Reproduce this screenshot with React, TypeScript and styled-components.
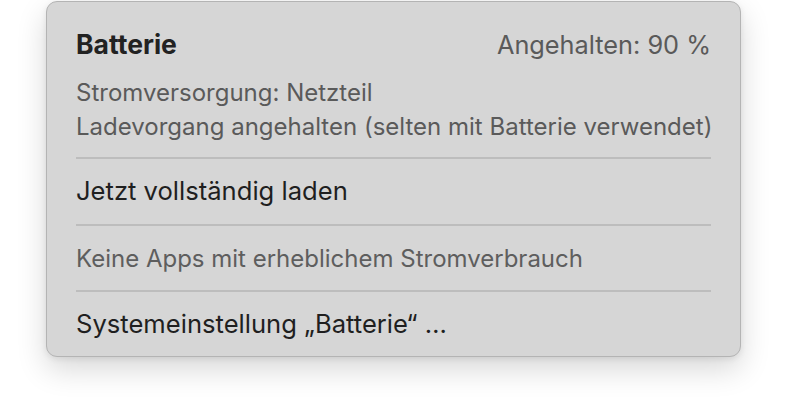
import React from "react";
import styled, { createGlobalStyle } from "styled-components";

const Global = createGlobalStyle`
  html, body { margin: 0; padding: 0; background: #ffffff; }
  body { font-family: Inter, "Noto Sans", "Liberation Sans", sans-serif; -webkit-font-smoothing: antialiased; }
`;

const Page = styled.div`
  width: 788px;
  height: 412px;
  padding: 1px 0 0 46px;
  box-sizing: border-box;
`;

const Panel = styled.div`
  width: 695px;
  box-sizing: border-box;
  background: #d6d6d6;
  border: 1px solid #b4b4b4;
  border-radius: 11px;
  box-shadow: 0 12px 30px rgba(0, 0, 0, 0.16), 0 2px 6px rgba(0, 0, 0, 0.08);
  padding: 0 29px 0 29px;
  display: flex;
  flex-direction: column;
`;

const Header = styled.div`
  padding: 25px 0 13px;
  display: flex;
  flex-direction: column;
`;

const TitleRow = styled.div`
  display: flex;
  justify-content: space-between;
  align-items: baseline;
  line-height: 34px;
  height: 34px;
  margin-bottom: 15px;
`;

const Title = styled.span`
  font-size: 26.5px;
  font-weight: 700;
  color: #222222;
`;

const Status = styled.span`
  font-size: 25.3px;
  color: #5a5a5a;
`;

const InfoLine = styled.div`
  font-size: 24px;
  line-height: 34px;
  color: #5a5a5a;
  white-space: nowrap;
`;

const Divider = styled.div`
  height: 2px;
  background: #bdbdbd;
`;

const Item = styled.div<{ $muted?: boolean; $pt?: number; $pb?: number }>`
  padding: ${(p) => (p.$pt ?? 15)}px 0 ${(p) => (p.$pb ?? 15)}px;
  height: 34px;
  font-size: ${(p) => (p.$muted ? "24px" : "25.6px")};
  line-height: 34px;
  color: ${(p) => (p.$muted ? "#5e5e5e" : "#1f1f1f")};
  white-space: nowrap;
`;

export default function App() {
  return (
    <>
      <Global />
      <Page>
        <Panel>
          <Header>
            <TitleRow>
              <Title>Batterie</Title>
              <Status>Angehalten: 90 %</Status>
            </TitleRow>
            <InfoLine>Stromversorgung: Netzteil</InfoLine>
            <InfoLine>Ladevorgang angehalten (selten mit Batterie verwendet)</InfoLine>
          </Header>
          <Divider />
          <Item $pb={16}>Jetzt vollständig laden</Item>
          <Divider />
          <Item $muted $pt={16} $pb={14}>Keine Apps mit erheblichem Stromverbrauch</Item>
          <Divider />
          <Item $pb={15}>Systemeinstellung „Batterie“ …</Item>
        </Panel>
      </Page>
    </>
  );
}
